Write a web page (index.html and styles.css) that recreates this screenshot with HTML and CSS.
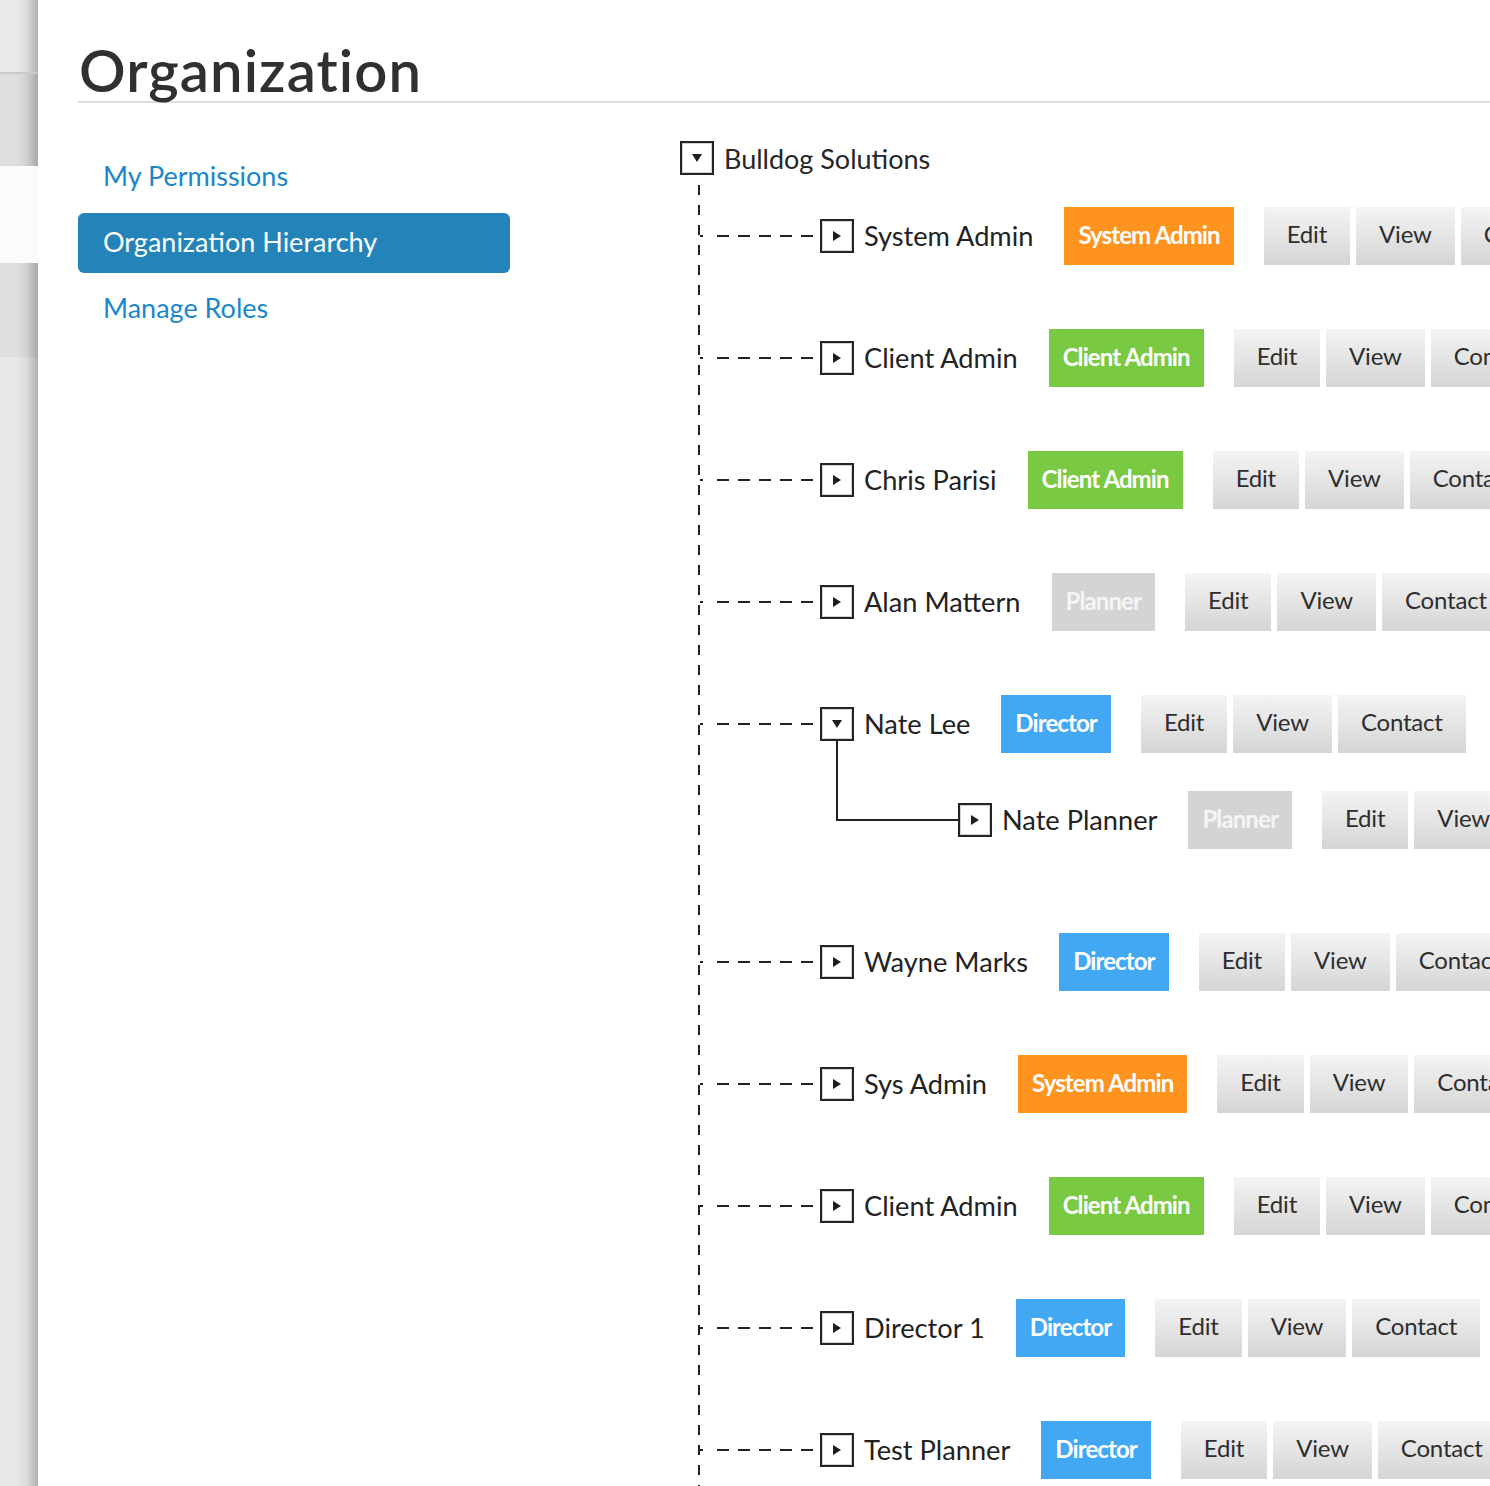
FILE: index.html
```html
<!DOCTYPE html>
<html lang="en">
<head>
<meta charset="utf-8">
<title>Organization</title>
<link rel="stylesheet" href="styles.css">
</head>
<body>
<div class="rail">
  <div class="rail-seg rail-top"></div>
  <div class="rail-seg rail-a"></div>
  <div class="rail-active"></div>
  <div class="rail-seg rail-b"></div>
  <div class="rail-seg rail-rest"></div>
</div>
<div class="main">
  <h1 class="title">Organization</h1>
  <div class="content">
    <nav class="sidenav">
      <a class="nav-item" href="#">My Permissions</a>
      <a class="nav-item active" href="#">Organization Hierarchy</a>
      <a class="nav-item" href="#">Manage Roles</a>
    </nav>
    <div class="tree">
      <div class="root-row">
        <span class="tog"><svg class="tri" width="10" height="8" viewBox="0 0 10 8"><polygon points="0,0 10,0 5,8"/></svg></span>
        <span class="root-name">Bulldog Solutions</span>
      </div>
      <ul class="children">
        <li class="node">
          <div class="row">
            <span class="conn"></span>
            <span class="tog"><svg class="tri" width="8" height="10" viewBox="0 0 8 10"><polygon points="0,0 8,5 0,10"/></svg></span>
            <span class="name">System Admin</span>
            <span class="badge b-sys">System Admin</span>
            <span class="btn">Edit</span><span class="btn">View</span><span class="btn">Contact</span>
          </div>
        </li>
        <li class="node">
          <div class="row">
            <span class="conn"></span>
            <span class="tog"><svg class="tri" width="8" height="10" viewBox="0 0 8 10"><polygon points="0,0 8,5 0,10"/></svg></span>
            <span class="name">Client Admin</span>
            <span class="badge b-client">Client Admin</span>
            <span class="btn">Edit</span><span class="btn">View</span><span class="btn">Contact</span>
          </div>
        </li>
        <li class="node">
          <div class="row">
            <span class="conn"></span>
            <span class="tog"><svg class="tri" width="8" height="10" viewBox="0 0 8 10"><polygon points="0,0 8,5 0,10"/></svg></span>
            <span class="name">Chris Parisi</span>
            <span class="badge b-client">Client Admin</span>
            <span class="btn">Edit</span><span class="btn">View</span><span class="btn">Contact</span>
          </div>
        </li>
        <li class="node">
          <div class="row">
            <span class="conn"></span>
            <span class="tog"><svg class="tri" width="8" height="10" viewBox="0 0 8 10"><polygon points="0,0 8,5 0,10"/></svg></span>
            <span class="name">Alan Mattern</span>
            <span class="badge b-planner">Planner</span>
            <span class="btn">Edit</span><span class="btn">View</span><span class="btn">Contact</span>
          </div>
        </li>
        <li class="node">
          <div class="row">
            <span class="conn"></span>
            <span class="tog"><svg class="tri" width="10" height="8" viewBox="0 0 10 8"><polygon points="0,0 10,0 5,8"/></svg></span>
            <span class="name">Nate Lee</span>
            <span class="badge b-director">Director</span>
            <span class="btn">Edit</span><span class="btn">View</span><span class="btn">Contact</span>
          </div>
          <ul class="sub">
            <li class="sub-node">
              <div class="row">
                <span class="elbow"></span>
                <span class="tog"><svg class="tri" width="8" height="10" viewBox="0 0 8 10"><polygon points="0,0 8,5 0,10"/></svg></span>
                <span class="name">Nate Planner</span>
                <span class="badge b-planner">Planner</span>
                <span class="btn">Edit</span><span class="btn">View</span><span class="btn">Contact</span>
              </div>
            </li>
          </ul>
        </li>
        <li class="node">
          <div class="row">
            <span class="conn"></span>
            <span class="tog"><svg class="tri" width="8" height="10" viewBox="0 0 8 10"><polygon points="0,0 8,5 0,10"/></svg></span>
            <span class="name">Wayne Marks</span>
            <span class="badge b-director">Director</span>
            <span class="btn">Edit</span><span class="btn">View</span><span class="btn">Contact</span>
          </div>
        </li>
        <li class="node">
          <div class="row">
            <span class="conn"></span>
            <span class="tog"><svg class="tri" width="8" height="10" viewBox="0 0 8 10"><polygon points="0,0 8,5 0,10"/></svg></span>
            <span class="name">Sys Admin</span>
            <span class="badge b-sys">System Admin</span>
            <span class="btn">Edit</span><span class="btn">View</span><span class="btn">Contact</span>
          </div>
        </li>
        <li class="node">
          <div class="row">
            <span class="conn"></span>
            <span class="tog"><svg class="tri" width="8" height="10" viewBox="0 0 8 10"><polygon points="0,0 8,5 0,10"/></svg></span>
            <span class="name">Client Admin</span>
            <span class="badge b-client">Client Admin</span>
            <span class="btn">Edit</span><span class="btn">View</span><span class="btn">Contact</span>
          </div>
        </li>
        <li class="node">
          <div class="row">
            <span class="conn"></span>
            <span class="tog"><svg class="tri" width="8" height="10" viewBox="0 0 8 10"><polygon points="0,0 8,5 0,10"/></svg></span>
            <span class="name">Director 1</span>
            <span class="badge b-director">Director</span>
            <span class="btn">Edit</span><span class="btn">View</span><span class="btn">Contact</span>
          </div>
        </li>
        <li class="node">
          <div class="row">
            <span class="conn"></span>
            <span class="tog"><svg class="tri" width="8" height="10" viewBox="0 0 8 10"><polygon points="0,0 8,5 0,10"/></svg></span>
            <span class="name">Test Planner</span>
            <span class="badge b-director">Director</span>
            <span class="btn">Edit</span><span class="btn">View</span><span class="btn">Contact</span>
          </div>
        </li>
      </ul>
    </div>
  </div>
</div>
</body>
</html>
```

FILE: styles.css
```css
html, body {
  margin: 0;
  height: 100%;
  overflow: hidden;
  background: #fff;
}
body {
  display: flex;
  font-family: Lato, "Liberation Sans", sans-serif;
  color: #262626;
}

/* left rail */
.rail {
  width: 38px;
  flex: none;
  display: flex;
  flex-direction: column;
}
.rail-seg {
  background-image: linear-gradient(to right, rgba(0,0,0,0) 45%, rgba(0,0,0,0.06) 70%, rgba(0,0,0,0.24) 100%);
}
.rail-top { height: 72px; background-color: #e9e9e9; border-bottom: 2px solid #c9c9c9; }
.rail-a { height: 92px; background-color: #dedede; }
.rail-active { height: 97px; background: #fbfbfb; }
.rail-b { height: 94px; background-color: #dedede; }
.rail-rest { flex: 1; background-color: #e8e8e8; }

/* main */
.main {
  flex: 1;
  min-width: 0;
  padding-left: 40px;
}
.title {
  margin: 0;
  padding: 41px 0 2px 1px;
  font-size: 58px;
  line-height: 58px;
  font-weight: 600;
  letter-spacing: 1.1px;
  color: #303030;
  border-bottom: 2px solid #dddddd;
  white-space: nowrap;
}
.content {
  display: flex;
  align-items: flex-start;
}

/* sidebar */
.sidenav {
  width: 432px;
  flex: none;
  margin-top: 44px;
  display: flex;
  flex-direction: column;
  gap: 6px;
}
.nav-item {
  display: block;
  height: 60px;
  line-height: 58px;
  padding-left: 25px;
  font-size: 27px;
  color: #1b86c9;
  text-decoration: none;
  border-radius: 6px;
}
.nav-item.active {
  background: #2484ba;
  color: #fff;
}

/* tree */
.tree {
  margin-left: 170px;
  margin-top: 38px;
  flex: none;
}
.root-row {
  display: flex;
  align-items: center;
  height: 34px;
  gap: 10px;
}
.root-name {
  font-size: 27px;
  white-space: nowrap;
}
.tog {
  width: 34px;
  height: 34px;
  box-sizing: border-box;
  flex: none;
  border: 2px solid #242424;
  box-shadow: inset 0 0 0 1px #d2d2d2;
  background: #fff;
  display: flex;
  align-items: center;
  justify-content: center;
}
.tri { fill: #1e1e1e; display: block; }

.children {
  list-style: none;
  margin: 0 0 0 18px;
  padding: 0 0 0 2px;
  background: repeating-linear-gradient(to bottom, transparent 0 10px, #222 10px 20px) 0 0 / 2px 100% no-repeat;
}
.node {
  padding: 32px 0;
}
.row {
  display: flex;
  align-items: center;
  height: 58px;
  white-space: nowrap;
}
.conn {
  flex: none;
  width: 120px;
  height: 2px;
  box-sizing: border-box;
  padding-left: 17px;
  background:
    linear-gradient(#222, #222) 0 0 / 3px 2px no-repeat border-box,
    repeating-linear-gradient(to right, #222 0 12px, transparent 12px 21px) content-box;
}
.name {
  margin-left: 10px;
  margin-right: 31px;
  font-size: 27.2px;
  line-height: 54px;
  color: #222;
}
.badge {
  flex: none;
  height: 58px;
  line-height: 56px;
  padding: 0 14px;
  font-size: 24px;
  font-weight: 700;
  letter-spacing: -0.9px;
  color: #fff;
  margin-right: 30px;
}
.b-sys { background: #ff931f; }
.b-client { background: #7ac943; }
.b-director { background: #42a8f3; }
.b-planner { background: #d4d4d4; color: #f5f5f5; }
.btn {
  flex: none;
  height: 58px;
  line-height: 54px;
  padding: 0 23px;
  font-size: 24px;
  letter-spacing: -0.2px;
  color: #2e2e2e;
  background: linear-gradient(#f4f4f4, #d5d5d5);
  margin-right: 6px;
}

/* nested */
.sub {
  list-style: none;
  margin: 0 0 0 136px;
  padding: 0;
}
.sub-node {
  padding: 38px 0 20px;
}
.elbow {
  flex: none;
  align-self: flex-start;
  width: 122px;
  height: 80px;
  margin-top: -50px;
  box-sizing: border-box;
  border-left: 2px solid #222;
  border-bottom: 2px solid #222;
}
```
